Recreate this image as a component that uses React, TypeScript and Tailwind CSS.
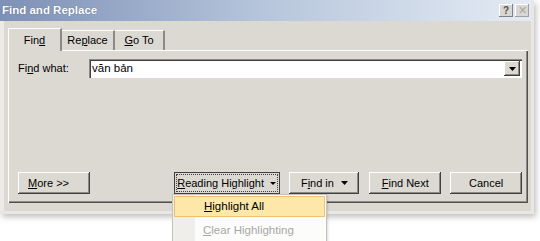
const raised =
  'bg-[#dcd9d3] shadow-[inset_-1px_-1px_#404040,inset_1px_1px_#ffffff,inset_-2px_-2px_#8c8a85]';

function Btn({ children, className = '' }: { children: React.ReactNode; className?: string }) {
  return (
    <div className={`h-[22px] flex items-center justify-center whitespace-nowrap text-[11px] text-black ${raised} ${className}`}>
      {children}
    </div>
  );
}

export default function App() {
  return (
    <div className="relative w-[540px] h-[241px] bg-white overflow-hidden font-['Liberation_Sans',Arial,sans-serif]">
      {/* Dialog */}
      <div className="w-[534px] h-[214px] bg-[#dcd9d3] flex flex-col shadow-[2px_3px_6px_rgba(0,0,0,0.25)] border-r-[3px] border-b-[3px] border-[#e9e7e3]">
        {/* Title bar */}
        <div className="h-[21px] flex items-center justify-between bg-gradient-to-r from-[#7d90b6] via-[#b7c6dc] to-[#e4ebf4] pl-[2px] pr-[2px]">
          <span className="text-[11.5px] font-bold text-white [text-shadow:0_0_1px_#4a5d85]">Find and Replace</span>
          <div className="flex gap-[2px]">
            <div className="w-[14px] h-[13px] flex items-center justify-center bg-[#d9d7d2] text-[10px] font-bold text-[#505050] shadow-[inset_-1px_-1px_#808080,inset_1px_1px_#ffffff]">?</div>
            <div className="w-[14px] h-[13px] flex items-center justify-center bg-[#d9d7d2] text-[11px] text-[#a8a8a8] shadow-[inset_-1px_-1px_#a0a0a0,inset_1px_1px_#ffffff]">✕</div>
          </div>
        </div>

        {/* Body */}
        <div className="flex-1 flex flex-col pl-[4px] pr-[3px] pt-[6px] pb-[8px] border-l-[4px] border-[#ecebe8]">
          {/* Tabs */}
          <div className="flex items-end h-[23px]">
            <div className="relative z-10 w-[54px] h-[23px] flex items-center justify-center text-[11px] bg-[#dcd9d3] border-t border-l border-white border-r-[2px] border-r-[#8c8a85] -mb-px">
              Fin<span className="underline">d</span>
            </div>
            <div className="w-[53px] h-[20px] flex items-center justify-center text-[11px] border-t border-white border-r-[2px] border-r-[#8c8a85]">
              Re<span className="underline">p</span>lace
            </div>
            <div className="w-[50px] h-[20px] flex items-center justify-center text-[11px] border-t border-white border-r-[2px] border-r-[#8c8a85]">
              <span className="underline">G</span>o To
            </div>
          </div>

          {/* Panel */}
          <div className="flex-1 flex flex-col justify-between border-t border-l border-white shadow-[inset_-1px_-1px_#505050,inset_-2px_-2px_#8c8a85] pl-[9px] pr-[6px] pt-[8px] pb-[9px]">
            <div className="flex items-center h-[19px]">
              <span className="w-[71px] text-[11px]">
                Fi<span className="underline">n</span>d what:
              </span>
              <div className="flex-1 h-[19px] bg-white flex items-center justify-between shadow-[inset_1px_1px_#8c8a85,inset_2px_2px_#404040,inset_-1px_-1px_#ffffff] pl-[3px] pr-[2px]">
                <span className="text-[11.5px]">văn bản</span>
                <div className={`w-[16px] h-[15px] flex items-center justify-center ${raised}`}>
                  <svg width="7" height="4" viewBox="0 0 7 4">
                    <path d="M0 0h7L3.5 4z" fill="#000" />
                  </svg>
                </div>
              </div>
            </div>

            <div className="flex items-center">
              <Btn className="w-[72px] justify-start pl-[10px]">
                <span className="underline">M</span>ore &gt;&gt;
              </Btn>
              <div className="w-[84px]" />
              <div className="w-[106px] h-[22px] flex items-center justify-center whitespace-nowrap text-[11px] bg-[#dcd9d3] shadow-[inset_-1px_-1px_#404040,inset_1px_1px_#404040] p-[3px]">
                <div className="w-full h-full flex items-center justify-center gap-[6px] outline outline-1 outline-dotted outline-[#404040]">
                  <span>
                    <span className="underline">R</span>eading Highlight
                  </span>
                  <svg width="6" height="3" viewBox="0 0 6 3">
                    <path d="M0 0h6L3 3z" fill="#000" />
                  </svg>
                </div>
              </div>
              <div className="w-[10px]" />
              <Btn className="w-[70px] gap-[7px]">
                <span>
                  F<span className="underline">i</span>nd in
                </span>
                <svg width="7" height="4" viewBox="0 0 7 4">
                  <path d="M0 0h7L3.5 4z" fill="#000" />
                </svg>
              </Btn>
              <div className="w-[10px]" />
              <Btn className="w-[72px]">
                <span className="underline">F</span>ind Next
              </Btn>
              <div className="w-[9px]" />
              <Btn className="w-[72px]">Cancel</Btn>
            </div>
          </div>
        </div>
      </div>

      {/* Dropdown menu */}
      <div className="absolute left-[172px] top-[194px] w-[155px] h-[50px] bg-[#fcfcfb] border border-[#c5c3be] shadow-[1px_1px_2px_rgba(0,0,0,0.15)] flex">
        <div className="w-[22px] bg-[#efeeea]" />
        <div className="absolute left-[1px] right-[1px] top-[1px] h-[21px] bg-[#fde7a9] border border-[#efc36d] flex items-center pl-[29px] text-[11.5px] text-black">
          <span className="underline">H</span>ighlight All
        </div>
        <div className="absolute left-[30px] top-[26px] h-[19px] flex items-center text-[11.5px] text-[#a7a7a7]">
          <span className="underline">C</span>lear Highlighting
        </div>
      </div>
    </div>
  );
}
